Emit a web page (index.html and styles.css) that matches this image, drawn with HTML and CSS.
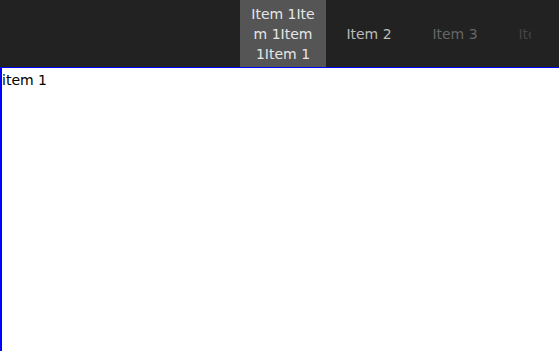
FILE: index.html
```html
<!DOCTYPE html>
<html>
<head>
<meta charset="utf-8">
<link rel="stylesheet" href="styles.css">
</head>
<body>
<div class="tabbar">
  <div class="tabs">
    <div class="tab active">Item 1Item 1Item 1Item 1</div>
    <div class="tab t2">Item 2</div>
    <div class="tab t3">Item 3</div>
    <div class="tab t4">Item 4</div>
  </div>
</div>
<div class="content">item 1</div>
</body>
</html>
```
FILE: styles.css
```css
html, body {
  margin: 0;
  padding: 0;
  height: 100%;
  overflow: hidden;
  background: #fff;
}
body {
  font-family: "DejaVu Sans", "Noto Sans", sans-serif;
  font-size: 14px;
  display: flex;
  flex-direction: column;
}
.tabbar {
  height: 67px;
  background: #222;
  border-bottom: 1px solid #0000ff;
  overflow: hidden;
  flex: none;
}
.tabs {
  display: flex;
  height: 100%;
  margin-left: 240px;
  width: 291px;
  overflow: hidden;
}
.tab {
  flex: none;
  width: 68px;
  padding: 0 9px;
  display: flex;
  align-items: center;
  justify-content: center;
  text-align: center;
  line-height: 20px;
  word-break: break-all;
  color: #bbb;
}
.tab.active {
  background: #555;
  color: #e6e6e6;
}
.tab.t3 {
  color: #666;
}
.tab.t4 {
  color: #444;
}
.content {
  flex: 1;
  border-left: 2px solid #0000ff;
  color: #000;
  line-height: 22px;
  padding-top: 1px;
}
```
